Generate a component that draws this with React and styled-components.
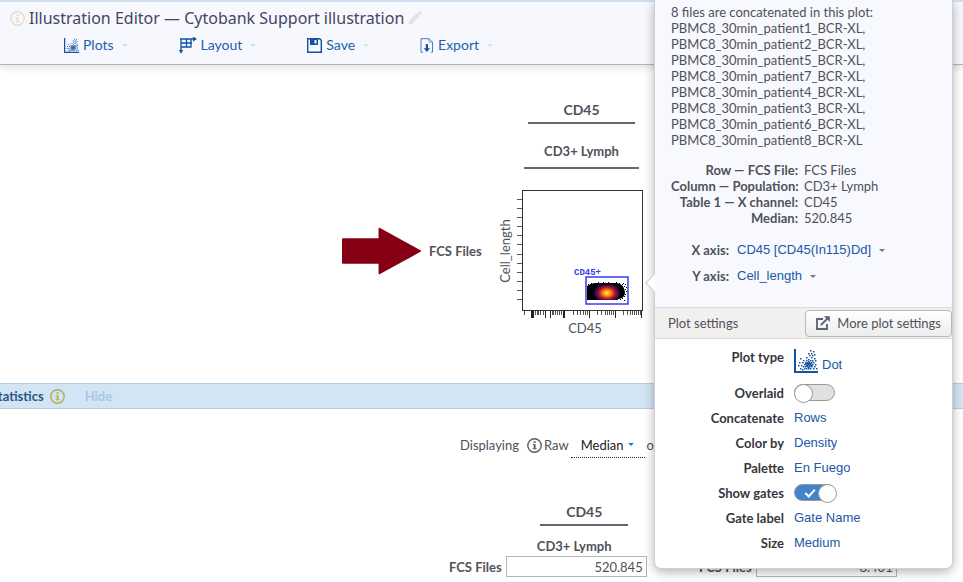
import React, { useState } from 'react';
import styled, { createGlobalStyle } from 'styled-components';

const GlobalStyle = createGlobalStyle`
  * {
    box-sizing: border-box;
  }

  body {
    margin: 0;
    overflow: hidden;
    background: #fff;
    color: #505159;
    font-family: Lato, sans-serif;
    font-size: 13px;
    line-height: 16px;
  }

  button,
  select {
    margin: 0;
    padding: 0;
    border: 0;
    background: none;
    color: inherit;
    font: inherit;
  }
`;

const Page = styled.div`
  position: relative;
  min-height: 100vh;
  overflow: hidden;
`;

const Header = styled.header`
  padding: 5px 10px 7px;
  border-top: 2px solid #cfdff0;
  border-bottom: 1px solid #b2b4b8;
  background: #f6f8fd;
  box-shadow: 0 2px 8px rgba(0, 0, 0, 0.14);
`;

const TitleRow = styled.div`
  display: flex;
  align-items: center;
  gap: 4px;
  height: 22px;
`;

const Title = styled.h1`
  margin: 0;
  color: #47445f;
  font-family: 'Noto Sans', sans-serif;
  font-size: 16px;
  font-weight: 400;
  line-height: 22px;
`;

const Menu = styled.nav`
  display: flex;
  gap: 51px;
  padding: 4px 0 0 54px;
`;

const MenuButton = styled.button`
  display: flex;
  align-items: center;
  gap: 4px;
  height: 24px;
  color: #1c5fae;
  font-size: 14px;
`;

const Caret = styled.span`
  width: 0;
  height: 0;
  border: 3px solid transparent;
  border-top-color: ${props => props.$color || '#777'};
  border-bottom: 0;
  pointer-events: none;
`;

const MenuCaret = styled(Caret)`
  margin-left: 4px;
`;

const Illustration = styled.section`
  display: grid;
  grid-template-columns: 79px 59px 147px;
  column-gap: 8px;
  align-items: center;
  padding: 37px 0 47px 342px;
`;

const PlotHeads = styled.div`
  grid-column: 3;
  display: flex;
  flex-direction: column;
  align-items: center;
  gap: 19px;
  padding: 0 0 21px 24px;
`;

const Head = styled.div`
  width: ${props => props.$width}px;
  padding-bottom: ${props => props.$gap}px;
  border-bottom: 2px solid #66676e;
  font-size: ${props => props.$size || 13}px;
  font-weight: 700;
  text-align: center;
`;

// The row head lines up with the plot frame, which ends 24px above the axis title.
const RowPointer = styled.div`
  display: flex;
  padding-bottom: 24px;
`;

const RowLabel = styled.div`
  padding-bottom: 24px;
  font-weight: 700;
  white-space: nowrap;
`;

const StatsBar = styled.div`
  display: flex;
  align-items: center;
  height: 26px;
  margin-left: -9px;
  border-top: 1px solid #b5cee2;
  border-bottom: 1px solid #b5cee2;
  background: #d3e5f5;
`;

const StatsTitle = styled.h2`
  margin: 0 6px 0 0;
  color: #2b5684;
  font-size: 13px;
  font-weight: 700;
`;

const HideButton = styled.button`
  margin-left: 20px;
  color: #aac5e8;
  font-weight: 700;
`;

const Displaying = styled.div`
  display: flex;
  align-items: center;
  padding: 23px 0 0 460px;
  white-space: nowrap;
`;

const DisplayMode = styled.span`
  display: flex;
  align-items: center;
  gap: 2px;
  margin: 0 2px 0 8px;
`;

const StatSelect = styled.div`
  display: flex;
  align-items: center;
  gap: 4px;
  height: 26px;
  margin-right: 2px;
  padding: 0 11px 0 10px;
  border-bottom: 1px dotted #222;
  color: #222;
`;

const NativeSelect = styled.select`
  appearance: none;
  field-sizing: content;
  cursor: pointer;
`;

const StatsTable = styled.table`
  margin: 46px 0 0 449px;
  border-spacing: 0;

  th,
  td {
    padding: 0;
    white-space: nowrap;
  }
`;

const StatHead = styled.th`
  && {
    padding-left: 16px;
  }

  > div {
    margin: 0 auto;
  }
`;

const PopulationHead = styled.th`
  && {
    padding: 12px 4px 2px 0;
  }
`;

const StatLabel = styled.th`
  width: ${props => (props.$spaced ? 109 : 56)}px;
  text-align: right;

  && {
    padding-right: 4px;
  }
`;

const StatValue = styled.td`
  width: 141px;
  height: 21px;
  border: 1px solid #b5b5b8;
  text-align: right;

  && {
    padding: 0 3px;
  }
`;

const Popover = styled.aside`
  position: absolute;
  top: 0;
  right: 11px;
  width: 297px;
  border-radius: 0 0 6px 6px;
  background: #fff;
  box-shadow: 0 0 0 1px #cfd0d4, 0 3px 12px rgba(0, 0, 0, 0.35);

  &::before {
    content: '';
    position: absolute;
    top: 276px;
    left: -7px;
    width: 13px;
    height: 13px;
    border: 1px solid #cfd0d4;
    border-width: 0 0 1px 1px;
    background: #fff;
    transform: rotate(45deg);
  }
`;

const Summary = styled.div`
  position: relative;
  padding: 4px 16px 18px;
  background: #f7f9fe;
`;

const FileList = styled.p`
  margin: 0 0 14px;
  white-space: pre-line;
`;

const Facts = styled.dl`
  display: grid;
  grid-template-columns: 127px 1fr;
  column-gap: 6px;
  margin: 0 0 11px;
  white-space: nowrap;

  dt {
    font-weight: 700;
    text-align: right;
  }

  dd {
    margin: 0;
  }
`;

const AxisRow = styled.div`
  display: grid;
  grid-template-columns: 58px auto 1fr;
  column-gap: 8px;
  align-items: center;
  height: 26px;

  label {
    font-weight: 700;
    text-align: right;
  }
`;

const LinkSelect = styled(NativeSelect)`
  justify-self: start;
  color: #2057a7;
  font-family: 'Liberation Sans', sans-serif;
`;

const SettingsBar = styled.div`
  display: flex;
  align-items: center;
  justify-content: space-between;
  height: 32px;
  padding-left: 13px;
  border-top: 1px solid #dddbdb;
  border-bottom: 1px solid #dddbdb;
  background: #f2efef;
`;

const MoreButton = styled.button`
  display: flex;
  align-items: center;
  gap: 7px;
  height: 27px;
  padding: 0 10px;
  border: 1px solid #b8b8b8;
  border-radius: 4px;
  background: linear-gradient(#fff, #ececec);
`;

const Settings = styled.div`
  padding: 3px 0 13px;
`;

const Setting = styled.div`
  display: grid;
  grid-template-columns: 129px 1fr;
  column-gap: 10px;
  align-items: ${props => (props.$tall ? 'start' : 'center')};
  height: ${props => (props.$tall ? 38 : 25)}px;
  padding-top: ${props => (props.$tall ? 7 : 0)}px;

  > label {
    color: #36373d;
    font-weight: 700;
    text-align: right;
  }
`;

const PlotType = styled.div`
  display: flex;
  align-items: flex-end;
  gap: 4px;
`;

const Switch = styled.input`
  appearance: none;
  position: relative;
  width: 41px;
  height: 17px;
  margin: 0;
  border: 1px solid #999;
  border-radius: 9px;
  background: #e0e0e0;

  &::before {
    content: '';
    position: absolute;
    top: -1px;
    left: -1px;
    width: 17px;
    height: 17px;
    border: 1px solid #999;
    border-radius: 50%;
    background: #fff;
  }

  &:checked {
    background: #4384c8;
  }

  &:checked::before {
    left: 23px;
  }

  &:checked::after {
    content: '';
    position: absolute;
    top: 2px;
    left: 12px;
    width: 4px;
    height: 8px;
    border: solid #fff;
    border-width: 0 2px 2px 0;
    transform: rotate(42deg);
  }
`;

const InfoIcon = ({ color, size = 15 }) => (
  <svg width={size} height={size} viewBox="0 0 15 15">
    <circle cx="7.5" cy="7.5" r="6.7" fill="none" stroke={color} strokeWidth="1.4" />
    <path d="M6.6 3.3h2v1.8h-2zM5.7 6.2h2.9v4h1v1.1H5.7v-1.1h1V7.3h-1z" fill={color} />
  </svg>
);

const PencilIcon = () => (
  <svg width="14" height="14" viewBox="0 0 14 14" fill="#dedede">
    <path d="M1 10.2 9.2 2l2.8 2.8L3.8 13 .5 13.5zM10 1.2l1-1q.7-.5 1.4.2l1.3 1.3q.6.6 0 1.2l-1 1z" />
    <path d="M3.2 10.7 9.7 4.2" stroke="#f6f8fd" strokeWidth=".8" />
  </svg>
);

// Dots of the small scatter icon, on a 24px grid.
const dots = [
  [16, 1], [19, 2], [14, 4], [17, 4], [20, 5], [15, 6], [18, 6], [12, 8], [17, 8], [6, 9],
  [20, 9], [14, 10], [16, 11], [9, 11], [12, 11], [18, 11], [21, 11], [5, 13], [8, 13], [11, 13],
  [13, 13], [15, 13], [17, 13], [19, 13], [10, 15], [12, 15], [14, 15], [16, 15], [18, 15],
  [21, 15], [4, 16], [7, 16], [9, 17], [11, 17], [13, 17], [15, 17], [17, 17], [20, 17],
  [6, 19], [10, 19], [12, 19], [14, 19], [16, 19], [19, 19], [22, 19], [8, 20], [13, 14], [15, 16],
  [14, 12], [16, 14], [12, 16], [14, 18], [17, 16], [11, 14], [12, 14], [14, 14], [13, 16], [15, 14],
];

const ScatterIcon = ({ size }) => (
  <svg width={size} height={size} viewBox="0 0 24 24" fill="#1252a3">
    <path d="M0 0h2v22h22v2H0z" />
    {dots.map(([x, y]) => (
      <rect key={`${x}-${y}`} x={x} y={y} width="1.5" height="1.5" />
    ))}
  </svg>
);

const LayoutIcon = () => (
  <svg width="18" height="17" viewBox="0 0 18 17" fill="none" stroke="#1252a3" strokeWidth="1.3">
    <path d="M1 2h14M2 1.5V14M2 6h11M2 10h10.5M7.5 2v8M12 2v8" />
    <path d="m14-.5 4 2.5-4 2.5zM-.2 13h4.4L2 16.8z" fill="#1252a3" stroke="none" />
  </svg>
);

const SaveIcon = () => (
  <svg width="15" height="15" viewBox="0 0 15 15">
    <path d="M.7.7h12l1.6 1.6v12H.7z" fill="none" stroke="#1252a3" strokeWidth="1.4" />
    <path d="M3 1h8v6H3zm4.5 1v3.5h2V2z" fill="#1252a3" fillRule="evenodd" />
  </svg>
);

const ExportIcon = () => (
  <svg width="14" height="15" viewBox="0 0 14 15" fill="none" stroke="#1252a3">
    <path d="M3 14.3H1V.7h8l3.5 3.5v10H11" strokeWidth="1" opacity=".75" />
    <path d="M9 .7v3.5h3.5" strokeWidth=".8" opacity=".6" />
    <path d="M5.8 6H8v4.2h2L6.900 14l-3.200-3.800h2.100z" fill="#1252a3" stroke="none" />
  </svg>
);

const ExternalIcon = () => (
  <svg width="14" height="14" viewBox="0 0 14 14" fill="none" stroke="#586273" strokeWidth="1.8">
    <path d="M7 3H1v10h10V8" />
    <path d="m4.8 9.2 6.7-6.7" />
    <path d="M8 .2h5.8V6z" fill="#586273" stroke="none" />
  </svg>
);

const Arrow = () => (
  <svg width="80" height="48" viewBox="0 0 80 48" fill="#850014" stroke="#850014" strokeLinejoin="round">
    <path d="M1 12h37V1.5L79 24 38 46.5V36H1z" strokeWidth="2" />
  </svg>
);

const yTicks = [9, 18, 27, 36, 45, 54, 64, 73, 82, 91, 100, 109];
const shortTicks = [
  24, 35, 37, 38, 40, 43, 52, 53, 55, 57, 59, 61, 73, 77, 80, 83, 85, 87,
  97, 101, 105, 107, 109, 111, 113, 123, 127, 130, 132, 134, 136, 138, 140,
];
const longTicks = [31, 32, 33, 45, 50, 63, 64, 89, 115, 141];
const strays = [
  [88, 94], [91, 93], [95, 93], [98, 92], [103, 92], [108, 92], [112, 93], [116, 92], [119, 93],
  [122, 94], [124, 96], [125, 99], [126, 101], [125, 104], [124, 106], [122, 108], [120, 109],
  [123, 93], [125, 94], [126, 97], [124, 110],
];

const DensityPlot = () => (
  <svg width="147" height="146" viewBox="-4 0 147 146">
    <defs>
      <radialGradient id="density">
        <stop offset="0" stopColor="#fff46a" />
        <stop offset="0.2" stopColor="#ffb51c" />
        <stop offset="0.4" stopColor="#f4540f" />
        <stop offset="0.6" stopColor="#a5102c" />
        <stop offset="0.8" stopColor="#3d0c58" />
        <stop offset="1" stopColor="#000" />
      </radialGradient>
    </defs>
    <g stroke="#555" shapeRendering="crispEdges">
      {yTicks.map(y => <path key={y} d={`M17 ${y + 0.5}h5`} />)}
      {shortTicks.map(x => <path key={x} d={`M${x + 0.5} 121v4`} />)}
      {longTicks.map(x => <path key={x} stroke="#222" d={`M${x + 0.5} 121v7`} />)}
    </g>
    <rect x="22.5" y="0.5" width="120" height="120" fill="none" stroke="#333" />
    <path d="M87 96q4-3 8-3h22q7 1 8 9 0 6-6 7-2 1-6 1H87z" fill="#000" />
    {strays.map(([x, y]) => <rect key={`${x}-${y}`} x={x} y={y} width="1" height="1" />)}
    <ellipse cx="107" cy="103" rx="14" ry="10" fill="url(#density)" clipPath="inset(2px 0 3px 0)" />
    <rect x="86" y="87" width="42" height="27" fill="none" stroke="#3b3be8" strokeWidth="1.5" />
    <text x="74" y="85" fill="#3b3be8" fontFamily="Liberation Mono, monospace" fontSize="9" fontWeight="700">CD45+</text>
    <text x="85" y="143" fill="#505159" fontSize="13" textAnchor="middle">CD45</text>
    <text transform="translate(10 61) rotate(-90)" fill="#505159" fontSize="13" textAnchor="middle">Cell_length</text>
  </svg>
);

const files = [1, 2, 5, 7, 4, 3, 6, 8].map(n => `PBMC8_30min_patient${n}_BCR-XL`);

const facts = [
  ['Row — FCS File:', 'FCS Files'],
  ['Column — Population:', 'CD3+ Lymph'],
  ['Table 1 — X channel:', 'CD45'],
  ['Median:', '520.845'],
];

const menuItems = [
  ['Plots', <ScatterIcon size={15} />],
  ['Layout', <LayoutIcon />],
  ['Save', <SaveIcon />],
  ['Export', <ExportIcon />],
];

const SelectSetting = ({ id, label, value }) => (
  <Setting>
    <label htmlFor={id}>{label}</label>
    <LinkSelect id={id}>
      <option>{value}</option>
    </LinkSelect>
  </Setting>
);

const SwitchSetting = ({ id, label, initial }) => {
  const [checked, setChecked] = useState(initial);

  return (
    <Setting>
      <label htmlFor={id}>{label}</label>
      <Switch
        id={id}
        type="checkbox"
        checked={checked}
        onChange={e => setChecked(e.target.checked)}
      />
    </Setting>
  );
};

const Axis = ({ id, label, value }) => (
  <AxisRow>
    <label htmlFor={id}>{label}</label>
    <LinkSelect id={id}>
      <option>{value}</option>
    </LinkSelect>
    <Caret />
  </AxisRow>
);

const PlotPopover = () => (
  <Popover>
    <Summary>
      <FileList>{`8 files are concatenated in this plot:\n${files.join(',\n')}`}</FileList>
      <Facts>
        {facts.map(([name, value]) => (
          <React.Fragment key={name}>
            <dt>{name}</dt>
            <dd>{value}</dd>
          </React.Fragment>
        ))}
      </Facts>
      <Axis id="x-axis" label="X axis:" value="CD45 [CD45(In115)Dd]" />
      <Axis id="y-axis" label="Y axis:" value="Cell_length" />
    </Summary>
    <SettingsBar>
      Plot settings
      <MoreButton>
        <ExternalIcon />
        More plot settings
      </MoreButton>
    </SettingsBar>
    <Settings>
      <Setting $tall>
        <label htmlFor="plot-type">Plot type</label>
        <PlotType>
          <ScatterIcon size={24} />
          <LinkSelect id="plot-type">
            <option>Dot</option>
          </LinkSelect>
        </PlotType>
      </Setting>
      <SwitchSetting id="overlaid" label="Overlaid" initial={false} />
      <SelectSetting id="concatenate" label="Concatenate" value="Rows" />
      <SelectSetting id="color-by" label="Color by" value="Density" />
      <SelectSetting id="palette" label="Palette" value="En Fuego" />
      <SwitchSetting id="show-gates" label="Show gates" initial />
      <SelectSetting id="gate-label" label="Gate label" value="Gate Name" />
      <SelectSetting id="size" label="Size" value="Medium" />
    </Settings>
  </Popover>
);

const App = () => (
  <Page>
    <GlobalStyle />
    <Header>
      <TitleRow>
        <InfoIcon color="#e3dfc4" />
        <Title>Illustration Editor — Cytobank Support illustration</Title>
        <PencilIcon />
      </TitleRow>
      <Menu>
        {menuItems.map(([name, icon]) => (
          <MenuButton key={name}>
            {icon}
            {name}
            <MenuCaret $color="#d3e3f3" />
          </MenuButton>
        ))}
      </Menu>
    </Header>
    <Illustration>
      <PlotHeads>
        <Head $width={107} $gap={4} $size={14}>CD45</Head>
        <Head $width={115} $gap={8}>CD3+ Lymph</Head>
      </PlotHeads>
      <RowPointer>
        <Arrow />
      </RowPointer>
      <RowLabel>FCS Files</RowLabel>
      <DensityPlot />
    </Illustration>
    <StatsBar>
      <StatsTitle>Statistics</StatsTitle>
      <InfoIcon color="#b3ac4f" />
      <HideButton>Hide</HideButton>
    </StatsBar>
    <Displaying>
      <label htmlFor="statistic">Displaying</label>
      <DisplayMode>
        <InfoIcon color="#5c5d66" />
        Raw
      </DisplayMode>
      <StatSelect>
        <NativeSelect id="statistic">
          <option>Median</option>
        </NativeSelect>
        <Caret $color="#1c7fe0" />
      </StatSelect>
      of
    </Displaying>
    <StatsTable>
      <thead>
        <tr>
          <td />
          <StatHead><Head $width={88} $gap={4} $size={14}>CD45</Head></StatHead>
          <td />
          <StatHead><Head $width={88} $gap={4} $size={14}>CD45</Head></StatHead>
        </tr>
        <tr>
          <td />
          <PopulationHead>CD3+ Lymph</PopulationHead>
          <td />
          <PopulationHead>CD3+ Lymph</PopulationHead>
        </tr>
      </thead>
      <tbody>
        <tr>
          <StatLabel>FCS Files</StatLabel>
          <StatValue>520.845</StatValue>
          <StatLabel $spaced>FCS Files</StatLabel>
          <StatValue>8.401</StatValue>
        </tr>
      </tbody>
    </StatsTable>
    <PlotPopover />
  </Page>
);

export default App;
